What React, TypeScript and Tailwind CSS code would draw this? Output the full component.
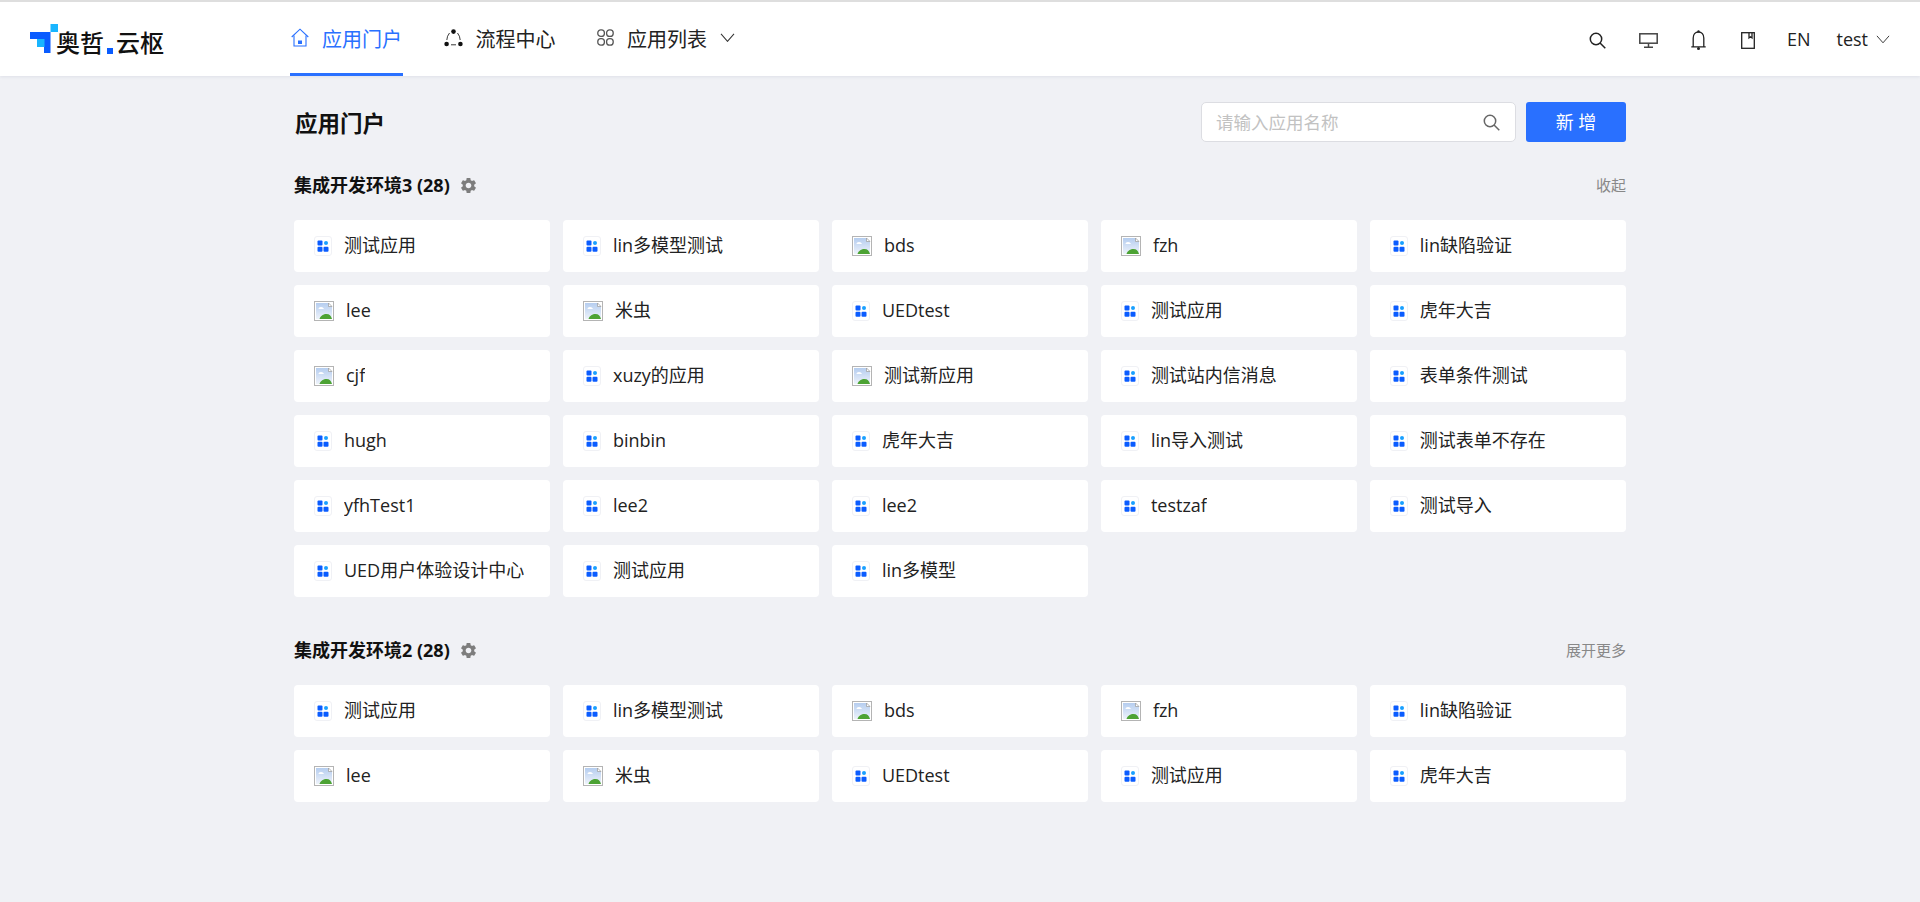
import React from 'react';
import { MdSettings } from 'react-icons/md';

const FONT = 'font-["Open_Sans","Noto_Sans_CJK_SC",sans-serif]';

type App = { name: string; broken?: boolean };

const firstGroup: App[] = [
    { name: '测试应用' },
    { name: 'lin多模型测试' },
    { name: 'bds', broken: true },
    { name: 'fzh', broken: true },
    { name: 'lin缺陷验证' },
    { name: 'lee', broken: true },
    { name: '米虫', broken: true },
    { name: 'UEDtest' },
    { name: '测试应用' },
    { name: '虎年大吉' },
    { name: 'cjf', broken: true },
    { name: 'xuzy的应用' },
    { name: '测试新应用', broken: true },
    { name: '测试站内信消息' },
    { name: '表单条件测试' },
    { name: 'hugh' },
    { name: 'binbin' },
    { name: '虎年大吉' },
    { name: 'lin导入测试' },
    { name: '测试表单不存在' },
    { name: 'yfhTest1' },
    { name: 'lee2' },
    { name: 'lee2' },
    { name: 'testzaf' },
    { name: '测试导入' },
    { name: 'UED用户体验设计中心' },
    { name: '测试应用' },
    { name: 'lin多模型' },
];

function Chevron({ width }: { width: number }) {
    return (
        <svg width={width} height={width * 0.62} viewBox="0 0 16 10" fill="none" stroke="#333" strokeWidth="1.100" className="shrink-0">
            <path d="M1 1l7 8 7-8" />
        </svg>
    );
}

function MagnifierIcon({ color, className }: { color: string; className?: string }) {
    return (
        <svg width="17" height="17" viewBox="0 0 17 17" fill="none" stroke={color} strokeWidth="1.500" className={className}>
            <circle cx="7" cy="7" r="5.700" />
            <path d="m11 11 5.300 5.300" />
        </svg>
    );
}

function Logo() {
    return (
        <div className="flex items-start w-[290px] pl-[30px] h-[31px]">
            <svg width="28" height="29" viewBox="0 0 28 29" className="shrink-0">
                <path d="M0 8H20.500V29H14V23H7V15H0Z" fill="#0a5cff" />
                <rect x="7" y="15" width="7.500" height="8" fill="#19b5ff" />
                <rect x="20.500" y="0" width="7.500" height="8" fill="#19b5ff" />
            </svg>
            <span className="text-[24px] leading-[24px] font-medium text-[#111] -ml-[2px] mt-[7px]">奥哲</span>
            <span className="w-[6px] h-[6px] bg-[#0a5cff] ml-[3px] mr-[3px] mt-[24px]" />
            <span className="text-[24px] leading-[24px] font-medium text-[#111] mt-[7px]">云枢</span>
        </div>
    );
}

function HomeIcon() {
    return (
        <svg width="18" height="19" viewBox="0 0 18 19" fill="none" stroke="#2970ff" strokeWidth="1.100">
            <path d="M.7 9 9 1.200 17.300 9" />
            <path d="M3 7.500v10.500h12V7.500" />
            <rect x="7" y="12.500" width="4" height="3.500" fill="#2970ff" stroke="none" />
        </svg>
    );
}

function FlowIcon() {
    return (
        <svg width="19" height="18" viewBox="0 0 19 18" fill="none" stroke="#222" strokeWidth="0.900">
            <path d="M5.500 4Q3 7 2.800 11" />
            <path d="M13.500 4Q16 7 16.200 11" />
            <path d="M7 15.800h5" />
            <circle cx="9.500" cy="2.600" r="2.300" fill="#111" stroke="none" />
            <circle cx="2.600" cy="15" r="2.300" fill="#111" stroke="none" />
            <circle cx="16.400" cy="15" r="2.300" fill="#111" stroke="none" />
        </svg>
    );
}

function GridIcon() {
    return (
        <svg width="17" height="17" viewBox="0 0 17 17" fill="none" stroke="#555" strokeWidth="1.300">
            <rect x="0.800" y="0.800" width="6.600" height="6.600" rx="3" />
            <rect x="9.600" y="0.800" width="6.600" height="6.600" rx="3" />
            <rect x="0.800" y="9.600" width="6.600" height="6.600" rx="3" />
            <rect x="9.600" y="9.600" width="6.600" height="6.600" rx="3" />
        </svg>
    );
}

function NavItem({ icon, label, active, chevron }: { icon: React.ReactNode; label: string; active?: boolean; chevron?: boolean }) {
    return (
        <div className={`h-[76px] flex items-center gap-[13px] px-px pt-[2px] border-b-[3px] ${active ? 'border-[#2970ff] text-[#2970ff]' : 'border-transparent text-[#222]'}`}>
            {icon}
            <span className="text-[20px] leading-[28px] mt-[4px]">{label}</span>
            {chevron && <Chevron width={15} />}
        </div>
    );
}

function Header() {
    return (
        <header className="h-[76px] bg-white border-t-2 border-[#dedede] shadow-[0_1px_3px_rgba(20,40,90,0.08)] flex items-start">
            <div className="pt-[22px]">
                <Logo />
            </div>
            <nav className="flex gap-[39.500px] -mt-[2px]">
                <NavItem icon={<HomeIcon />} label="应用门户" active />
                <NavItem icon={<FlowIcon />} label="流程中心" />
                <NavItem icon={<GridIcon />} label="应用列表" chevron />
            </nav>
            <div className="ml-auto flex items-center h-[74px] pr-[30px] text-[#222]">
                <MagnifierIcon color="#222" className="mr-[33px] mt-[2px]" />
                <svg width="19" height="15" viewBox="0 0 19 15" fill="none" stroke="#444" strokeWidth="1.500" className="mr-[33px] mt-[2px]">
                    <rect x="0.800" y="0.800" width="17.400" height="9.400" />
                    <path d="M9.500 10.500v3M5 14.200h9" />
                </svg>
                <svg width="15" height="20" viewBox="0 0 15 20" fill="none" stroke="#222" strokeWidth="1.300" className="mr-[35px] mt-[2px]">
                    <path d="M.3 16.800h14.400M2.200 16.800V8C2.200 4.500 4.200 2 7.500 2s5.300 2.500 5.300 6v8.800" />
                    <circle cx="7.500" cy="1.400" r="1.200" fill="#222" stroke="none" />
                    <circle cx="7.500" cy="18.400" r="1.500" fill="#222" stroke="none" />
                </svg>
                <svg width="14" height="17" viewBox="0 0 14 17" fill="none" stroke="#222" strokeWidth="1.300" className="mr-[32px] mt-[2px]">
                    <rect x="0.700" y="0.700" width="12.600" height="15.600" />
                    <path d="M8 1v5l1.500-1.200L11 6V1" />
                </svg>
                <span className="text-[18px] leading-[24px] mr-[26px]">EN</span>
                <span className="text-[18px] leading-[24px] mr-[8px]">test</span>
                <Chevron width={14} />
            </div>
        </header>
    );
}

function AppIcon() {
    return (
        <span className="w-[18px] h-[20px] mr-[12px] shrink-0 rounded-[3px] border border-[#f0f1f5] flex items-center justify-center">
            <svg width="12" height="12" viewBox="0 0 12 12" fill="#0a5cff">
                <rect x="0.500" y="0.500" width="5" height="5" rx="1" />
                <circle cx="9" cy="3" r="2" fill="#19a0ff" />
                <rect x="0.500" y="6.800" width="5" height="5" rx="1" />
                <rect x="6.500" y="6.800" width="5" height="5" rx="1" />
            </svg>
        </span>
    );
}

// the picture holds the browser's broken-image mark
function BrokenImage() {
    return (
        <svg width="20" height="20" viewBox="0 0 20 20" className="mr-[12px] shrink-0">
            <defs>
                <linearGradient id="broken-sky" x1="0" y1="0" x2="0" y2="1">
                    <stop offset="0" stopColor="#b5cdef" />
                    <stop offset="1" stopColor="#eef3fb" />
                </linearGradient>
            </defs>
            <rect x="0.500" y="0.500" width="19" height="19" fill="#fff" stroke="#b4b4b4" />
            <path d="M2 2h12.500L18 5.500V18H2Z" fill="url(#broken-sky)" />
            <path d="M14.500 2v3.500H18Z" fill="#fff" stroke="#9a9a9a" strokeWidth="0.700" />
            <path d="M4.500 8c0-1.200 1.200-2 2.500-2s2.500.8 3 2Z" fill="#fff" />
            <path d="M5.500 18c1-3.500 4-5 7-5s4.500 1.500 5.500 5Z" fill="#4ca334" />
        </svg>
    );
}

function AppCard({ app }: { app: App }) {
    return (
        <div className="h-[52px] bg-white rounded-[4px] flex items-center pl-[20px] pr-2">
            {app.broken ? <BrokenImage /> : <AppIcon />}
            <span className="text-[18px] leading-[26px] text-[#222] truncate pb-[2px]">{app.name}</span>
        </div>
    );
}

function Group({ title, action, apps }: { title: string; action: string; apps: App[] }) {
    return (
        <section>
            <div className="h-[24px] flex items-center">
                <h2 className="text-[18px] leading-[24px] font-bold text-[#111]">{title}</h2>
                <MdSettings size={19} color="#7d7d7d" className="ml-[9px]" />
                <span className="ml-auto text-[15px] text-[#888]">{action}</span>
            </div>
            <div className="grid grid-cols-5 gap-x-[12.800px] gap-y-[13px] mt-[23px]">
                {apps.map((app, i) => (
                    <AppCard key={i} app={app} />
                ))}
            </div>
        </section>
    );
}

export default function App() {
    return (
        <div className={`h-[902px] bg-[#f0f1f5] overflow-hidden ${FONT}`}>
            <Header />
            <main className="w-[1332px] ml-[294px]">
                <div className="flex items-center pt-[26px] h-[66px]">
                    <h1 className="text-[22.500px] leading-[30px] font-bold text-[#111] flex-1 pl-px pt-[4px]">应用门户</h1>
                    <div className="w-[315px] h-[40px] bg-white border border-[#dcdde2] rounded-[5px] flex items-center pl-[14px] pr-[15px]">
                        <span className="text-[17.500px] text-[#c2c2c2] flex-1">请输入应用名称</span>
                        <MagnifierIcon color="#666" />
                    </div>
                    <button className="w-[100px] h-[40px] ml-[10px] bg-[#2970ff] rounded-[3px] text-white text-[18px]">新 增</button>
                </div>
                <div className="mt-[31px]">
                    <Group title="集成开发环境3 (28)" action="收起" apps={firstGroup} />
                </div>
                <div className="mt-[41px]">
                    <Group title="集成开发环境2 (28)" action="展开更多" apps={firstGroup.slice(0, 10)} />
                </div>
            </main>
        </div>
    );
}
